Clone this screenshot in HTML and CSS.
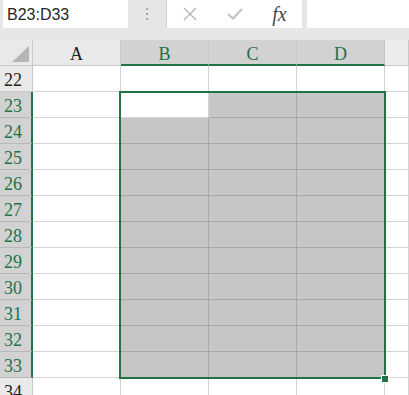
FILE: index.html
```html
<!DOCTYPE html>
<html lang="en">
<head>
    <meta charset="UTF-8">
    <meta name="viewport" content="width=device-width, initial-scale=1.0">
    <title>Sheet</title>
    <link rel="stylesheet" href="styles.css">
</head>
<body>
    <div class="toolbar">
        <div class="name-box">B23:D33</div>
        <div class="grip"><span></span><span></span><span></span></div>
        <div class="buttons">
            <div class="btn">
                <svg width="14" height="14" viewBox="0 0 14 14"><path d="M1 1 L13 13 M13 1 L1 13" stroke="#b4b4b4" stroke-width="1.3" fill="none"/></svg>
            </div>
            <div class="btn">
                <svg width="16" height="12" viewBox="0 0 16 12"><path d="M1 6 L6 10.5 L15 1" stroke="#c4c4c4" stroke-width="2.2" fill="none"/></svg>
            </div>
            <div class="btn fx">fx</div>
        </div>
        <div class="formula"></div>
    </div>

    <div class="sheet">
        <div class="corner"><span class="tri"></span></div>
        <div class="col-head">A</div>
        <div class="col-head sel">B</div>
        <div class="col-head sel">C</div>
        <div class="col-head sel">D</div>
        <div class="col-head last"></div>

        <div class="row-head">22</div>
        <div class="cell"></div><div class="cell"></div><div class="cell"></div><div class="cell"></div><div class="cell"></div>

        <div class="row-head sel">23</div>
        <div class="cell"></div><div class="cell active"></div><div class="cell sel"></div><div class="cell sel"></div><div class="cell"></div>

        <div class="row-head sel">24</div>
        <div class="cell"></div><div class="cell sel"></div><div class="cell sel"></div><div class="cell sel"></div><div class="cell"></div>

        <div class="row-head sel">25</div>
        <div class="cell"></div><div class="cell sel"></div><div class="cell sel"></div><div class="cell sel"></div><div class="cell"></div>

        <div class="row-head sel">26</div>
        <div class="cell"></div><div class="cell sel"></div><div class="cell sel"></div><div class="cell sel"></div><div class="cell"></div>

        <div class="row-head sel">27</div>
        <div class="cell"></div><div class="cell sel"></div><div class="cell sel"></div><div class="cell sel"></div><div class="cell"></div>

        <div class="row-head sel">28</div>
        <div class="cell"></div><div class="cell sel"></div><div class="cell sel"></div><div class="cell sel"></div><div class="cell"></div>

        <div class="row-head sel">29</div>
        <div class="cell"></div><div class="cell sel"></div><div class="cell sel"></div><div class="cell sel"></div><div class="cell"></div>

        <div class="row-head sel">30</div>
        <div class="cell"></div><div class="cell sel"></div><div class="cell sel"></div><div class="cell sel"></div><div class="cell"></div>

        <div class="row-head sel">31</div>
        <div class="cell"></div><div class="cell sel"></div><div class="cell sel"></div><div class="cell sel"></div><div class="cell"></div>

        <div class="row-head sel">32</div>
        <div class="cell"></div><div class="cell sel"></div><div class="cell sel"></div><div class="cell sel"></div><div class="cell"></div>

        <div class="row-head sel">33</div>
        <div class="cell"></div><div class="cell sel"></div><div class="cell sel"></div><div class="cell sel"></div><div class="cell"></div>

        <div class="row-head">34</div>
        <div class="cell"></div><div class="cell"></div><div class="cell"></div><div class="cell"></div><div class="cell"></div>

        <div class="selection"></div>
        <div class="handle"></div>
    </div>
</body>
</html>
```

FILE: styles.css
```css
body {
    margin: 0;
    background: #ffffff;
    overflow: hidden;
}
.toolbar {
    display: flex;
    align-items: flex-start;
    height: 40px;
    background: #e6e6e6;
}
.name-box {
    margin-left: 3px;
    width: 121px;
    height: 28px;
    padding-left: 4px;
    background: #fff;
    font-family: "Liberation Sans", Arial, sans-serif;
    font-size: 16px;
    line-height: 29px;
    color: #262626;
}
.grip {
    width: 38px;
    height: 28px;
    display: flex;
    flex-direction: column;
    align-items: center;
    justify-content: center;
    gap: 3px;
}
.grip span {
    width: 2px;
    height: 2px;
    background: #a6a6a6;
}
.buttons {
    display: flex;
    width: 135px;
    height: 28px;
    background: #fff;
    border-left: 1px solid #d4d4d4;
}
.btn {
    width: 45px;
    height: 28px;
    display: flex;
    align-items: center;
    justify-content: center;
}
.fx {
    font-family: "Liberation Serif", "Times New Roman", serif;
    font-style: italic;
    font-size: 20px;
    color: #4a4a4a;
    padding-bottom: 2px;
}
.formula {
    flex: 1;
    height: 28px;
    margin-left: 5px;
    background: #fff;
}
.sheet {
    position: relative;
    display: grid;
    grid-template-columns: 33px 88px 88px 88px 88px 1fr;
    grid-auto-rows: 26px;
    font-family: "Liberation Serif", "Times New Roman", serif;
    font-size: 18px;
    color: #222;
}
.corner, .col-head, .row-head, .cell {
    box-sizing: border-box;
    border-right: 1px solid #d4d4d4;
    border-bottom: 1px solid #d4d4d4;
}
.corner, .col-head, .row-head {
    background: #e9e9e9;
    border-color: #c8c8c8;
}
.corner {
    position: relative;
}
.tri {
    position: absolute;
    left: 12px;
    top: 6px;
    width: 0;
    height: 0;
    border-left: 17px solid transparent;
    border-bottom: 16px solid #b6b6b6;
}
.col-head {
    text-align: center;
    line-height: 29px;
}
.col-head.last {
    background: #ececec;
}
.col-head.sel {
    background: #d2d2d2;
    color: #217346;
    border-bottom: 2px solid #217346;
    line-height: 28px;
}
.row-head {
    padding-left: 4px;
    line-height: 28px;
}
.row-head.sel {
    background: #d2d2d2;
    color: #217346;
    border-right: 2px solid #217346;
    border-bottom-color: #b8b8b8;
}
.cell.sel {
    background: #c6c6c6;
    border-color: #a8a8a8;
}
.selection {
    position: absolute;
    left: 119px;
    top: 51px;
    width: 267px;
    height: 288px;
    box-sizing: border-box;
    border: 2px solid #217346;
}
.handle {
    position: absolute;
    left: 381px;
    top: 335px;
    width: 6px;
    height: 6px;
    background: #217346;
    border: 1px solid #fff;
}
```
